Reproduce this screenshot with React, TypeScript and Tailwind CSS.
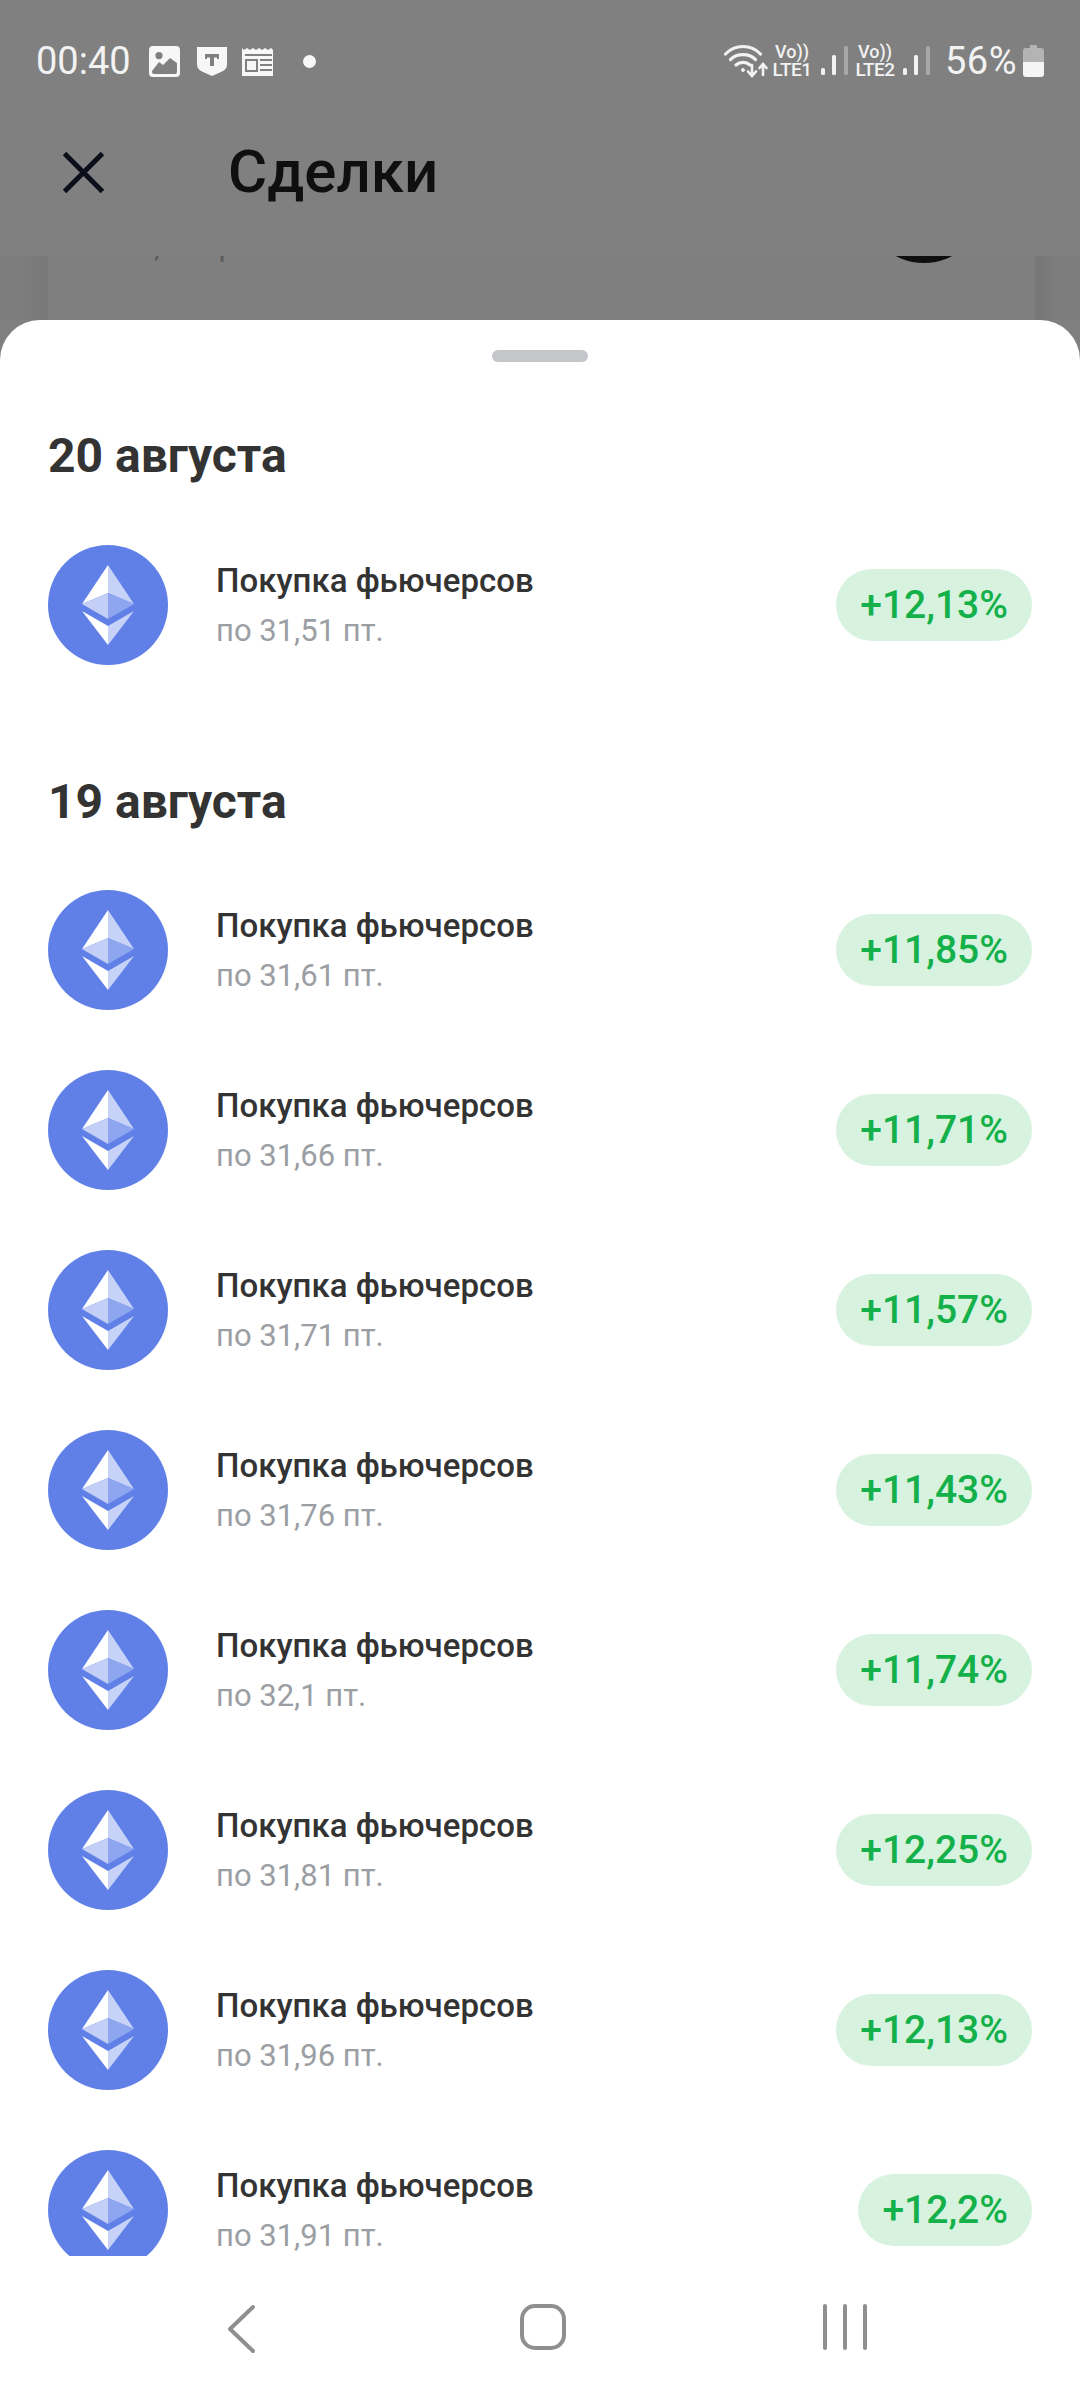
const font = { fontFamily: "Roboto, 'Noto Sans', sans-serif" };

function EthCoin() {
  return (
    <svg viewBox="0 0 120 120" className="w-[120px] h-[120px] shrink-0">
      <circle cx="60" cy="60" r="60" fill="#6080e8" />
      <polygon points="60,20 34,59 60,48" fill="#ffffff" />
      <polygon points="60,20 86,59 60,48" fill="#c6d2f7" />
      <polygon points="34,59 60,48 60,74" fill="#c3cff6" />
      <polygon points="86,59 60,48 60,74" fill="#8ea6ef" />
      <polygon points="34,66 60,81 60,100" fill="#ffffff" />
      <polygon points="86,66 60,81 60,100" fill="#c6d2f7" />
    </svg>
  );
}

function Row({ sub, pct }: { sub: string; pct: string }) {
  return (
    <div className="flex items-center h-[120px] mb-[60px] shrink-0">
      <EthCoin />
      <div className="flex flex-col ml-[48px] flex-1 pt-[2px]">
        <div className="text-[33px] leading-[40px] font-medium text-[#333333]">Покупка фьючерсов</div>
        <div className="text-[31px] leading-[40px] mt-[10px] text-[#9b9ea3]">{sub}</div>
      </div>
      <div className="h-[72px] rounded-full bg-[#d7f3e0] px-[24px] flex items-center text-[39px] font-medium text-[#14b04a]">
        {pct}
      </div>
    </div>
  );
}

function Signal() {
  return (
    <svg viewBox="0 0 27 30" className="w-[27px] h-[30px]">
      <rect x="0" y="22" width="4" height="7" rx="1.500" fill="#f2f2f2" />
      <rect x="11" y="9" width="4" height="20" rx="1.500" fill="#f2f2f2" />
      <rect x="23" y="0" width="4" height="29" rx="1.500" fill="#a8a8a8" />
    </svg>
  );
}

function Lte({ n }: { n: string }) {
  return (
    <div className="flex flex-col items-center w-[38px] text-[#f2f2f2] font-medium leading-none">
      <div className="text-[18px] h-[17px]">Vo))</div>
      <div className="text-[19px] tracking-[-0.5px]">LTE{n}</div>
    </div>
  );
}

function StatusBar() {
  return (
    <div className="h-[120px] pt-[41px] px-[36px] flex items-start justify-between shrink-0">
      <div className="flex items-center h-[40px]">
        <span className="text-[38px] leading-[40px] text-[#f2f2f2] w-[113px]">00:40</span>
        <svg viewBox="0 0 31 31" className="w-[31px] h-[31px]">
          <path fillRule="evenodd" fill="#f7f7f7" d="M4 0h23a4 4 0 0 1 4 4v23a4 4 0 0 1-4 4H4a4 4 0 0 1-4-4V4a4 4 0 0 1 4-4zM10 6a3.600 3.600 0 1 0 0 7.200A3.600 3.600 0 0 0 10 6zM3 25v1a2 2 0 0 0 2 2h21a2 2 0 0 0 2-2v-9l-7-5-7 7-4-3z" />
        </svg>
        <svg viewBox="0 0 30 30" className="w-[30px] h-[30px] ml-[17px]">
          <path fill="#f7f7f7" d="M0 1h30v17c0 4-2 6-5 7.500L15 30 5 25.500C2 24 0 22 0 18z" />
          <path fill="#808080" d="M8 8h14v5h-2v-1.500h-3V20h-4v-8.500h-3V13H8z" />
        </svg>
        <svg viewBox="0 0 33 30" className="w-[33px] h-[30px] ml-[15px]">
          <path fill="#f7f7f7" d="M0 2l2 2 3-2 3 2 3-2 3 2 3-2 3 2 3-2 3 2 3-2 2 2v26a2 2 0 0 1-2 2H2a2 2 0 0 1-2-2z" />
          <g fill="#808080">
            <rect x="3" y="8" width="27" height="2" />
            <path fillRule="evenodd" d="M3 13h13v13H3zM5 15v9h9v-9z" />
            <rect x="18" y="13" width="12" height="2" />
            <rect x="18" y="18" width="12" height="2" />
            <rect x="18" y="23" width="12" height="2" />
          </g>
        </svg>
        <span className="w-[13px] h-[13px] rounded-full bg-[#f7f7f7] ml-[28px]" />
      </div>
      <div className="flex items-center h-[40px] text-[#f2f2f2]">
        <svg viewBox="0 0 44 34" className="w-[44px] h-[34px]" fill="none" stroke="#f2f2f2" strokeWidth="3.200" strokeLinecap="round">
          <path d="M1.500 10C11 0 27 0 36.500 10" />
          <path d="M6.500 15.500C13 9 25 9 31.500 15.500" />
          <path d="M12 21c4-3.500 10-3.500 14 0" />
          <circle cx="19" cy="26" r="1.500" fill="#f2f2f2" strokeWidth="1" />
          <path d="M28 21v11m-4-4.500l4 4.500 4-4.500" strokeWidth="2.600" />
          <path d="M39 31V20m-3.500 4l3.500-4 3.500 4" strokeWidth="2.600" />
        </svg>
        <div className="ml-[5px]"><Lte n="1" /></div>
        <div className="ml-[10px]"><Signal /></div>
        <div className="ml-[8px]"><Lte n="2" /></div>
        <div className="ml-[9px]"><Signal /></div>
        <span className="ml-[15px] text-[38px] leading-[40px] w-[69px] tracking-[0.5px]">56%</span>
        <svg viewBox="0 0 21 32" className="w-[21px] h-[32px] ml-[9px]">
          <path fill="#b4b4b4" d="M7 0h7v3h4a3 3 0 0 1 3 3v11H0V6a3 3 0 0 1 3-3h4z" />
          <path fill="#f5f5f5" d="M0 17h21v12a3 3 0 0 1-3 3H3a3 3 0 0 1-3-3z" />
        </svg>
      </div>
    </div>
  );
}

function Backdrop() {
  return (
    <div className="h-[64px] shrink-0 overflow-hidden flex px-[15px] bg-[#7d7d7d]">
      <div className="flex-1 h-full flex justify-between bg-[#7f7f7f] relative">
        <div className="w-[33px] h-full bg-gradient-to-l from-[#777777] to-[#7e7e7e]" />
        <div className="absolute left-[104px] top-[-28px] text-[31px] leading-[36px] text-[#5c5c5c] whitespace-nowrap">+1,5 через</div>
        <div className="absolute left-[849px] top-[-113px] w-[120px] h-[120px] rounded-full bg-[#0f0f0f]" />
        <div className="w-[30px] h-full bg-gradient-to-r from-[#777777] to-[#7e7e7e]" />
      </div>
    </div>
  );
}

function Nav() {
  return (
    <div className="h-[145px] shrink-0 flex justify-center items-start pt-[48px] pl-[6px] gap-[202px]">
      <div className="w-[100px] flex justify-center">
        <svg viewBox="0 0 30 50" className="w-[30px] h-[50px]" fill="none" stroke="#8f8f8f" strokeWidth="4" strokeLinecap="round" strokeLinejoin="round">
          <path d="M27 3L4 25l23 22" />
        </svg>
      </div>
      <div className="w-[100px] flex justify-center">
        <div className="w-[46px] h-[46px] rounded-[15px] border-[4px] border-[#8f8f8f]" />
      </div>
      <div className="w-[100px] flex justify-center gap-[16px]">
        <span className="w-[4px] h-[46px] rounded-full bg-[#8f8f8f]" />
        <span className="w-[4px] h-[46px] rounded-full bg-[#8f8f8f]" />
        <span className="w-[4px] h-[46px] rounded-full bg-[#8f8f8f]" />
      </div>
    </div>
  );
}

export default function App() {
  const rows19 = [
    ["по 31,61 пт.", "+11,85%"],
    ["по 31,66 пт.", "+11,71%"],
    ["по 31,71 пт.", "+11,57%"],
    ["по 31,76 пт.", "+11,43%"],
    ["по 32,1 пт.", "+11,74%"],
    ["по 31,81 пт.", "+12,25%"],
    ["по 31,96 пт.", "+12,13%"],
    ["по 31,91 пт.", "+12,2%"],
  ];
  return (
    <div className="w-[1080px] h-[2400px] flex flex-col overflow-hidden bg-[#808080]" style={font}>
      <StatusBar />
      <div className="h-[136px] shrink-0 flex items-start pl-[63px] pt-[14px]">
        <svg viewBox="0 0 41 41" className="w-[41px] h-[41px] mt-[18px]" fill="none" stroke="#0c0f1a" strokeWidth="5">
          <path d="M1.500 1.500l38 38M39.500 1.500l-38 38" />
        </svg>
        <div className="ml-[124px] text-[60px] leading-[70px] font-medium text-[#0f0f0f] mt-[3px]">Сделки</div>
      </div>
      <Backdrop />
      <div className="flex-1 min-h-0 flex flex-col bg-white rounded-t-[40px]">
        <div className="h-[1936px] shrink-0 overflow-hidden px-[48px]">
          <div className="w-[96px] h-[12px] rounded-full bg-[#c4c6ca] mx-auto mt-[30px]" />
          <div className="text-[48px] leading-[56px] font-bold text-[#333333] mt-[66px] mb-[61px]">20 августа</div>
          <Row sub="по 31,51 пт." pct="+12,13%" />
          <div className="text-[48px] leading-[56px] font-bold text-[#333333] mt-[109px] mb-[60px]">19 августа</div>
          {rows19.map(([s, p], i) => (
            <Row key={i} sub={s} pct={p} />
          ))}
        </div>
        <Nav />
      </div>
    </div>
  );
}
